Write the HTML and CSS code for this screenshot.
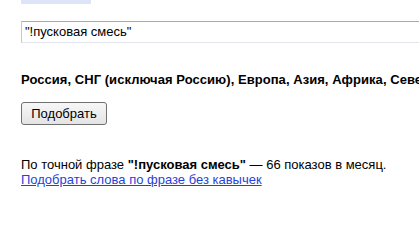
FILE: index.html
```html
<!DOCTYPE html>
<html>
<head>
<meta charset="utf-8">
<link rel="stylesheet" href="styles.css">
</head>
<body>
<div class="page">
  <div class="tab"></div>
  <div class="query">"!пусковая смесь"</div>
  <div class="regions">Россия, СНГ (исключая Россию), Европа, Азия, Африка, Северная Америка</div>
  <button class="btn">Подобрать</button>
  <div class="result">По точной фразе <b>"!пусковая смесь"</b> — 66 показов в месяц.</div>
  <a class="link" href="#">Подобрать слова по фразе без кавычек</a>
</div>
</body>
</html>
```

FILE: styles.css
```css
html, body {
  margin: 0;
  padding: 0;
  background: #fff;
  overflow: hidden;
}
body {
  font-family: Arial, "Liberation Sans", sans-serif;
  font-size: 13px;
  color: #000;
}
.page {
  padding-left: 21px;
  width: 398px;
  overflow: hidden;
  display: flex;
  flex-direction: column;
  align-items: flex-start;
}
.tab {
  width: 70px;
  height: 4px;
  background: #dde4f7;
}
.query {
  margin-top: 17px;
  width: 560px;
  height: 20px;
  border-top: 1px solid #a9a9a9;
  border-left: 1px solid #c8c8d0;
  border-bottom: 1px solid #e3e3ee;
  box-sizing: content-box;
  padding-left: 3px;
  line-height: 20px;
  white-space: nowrap;
}
.regions {
  margin-top: 29px;
  font-weight: bold;
  white-space: nowrap;
  line-height: 15px;
  letter-spacing: 0.05px;
}
.btn {
  margin-top: 15px;
  width: 86px;
  height: 23px;
  font-family: Arial, "Liberation Sans", sans-serif;
  font-size: 13px;
  color: #000;
  background: linear-gradient(#f7f7f7, #e4e4e4);
  border: 1px solid #707070;
  border-radius: 3px;
  padding: 0;
}
.result {
  margin-top: 32px;
  line-height: 15px;
  white-space: nowrap;
}
.link {
  color: #2a3fd6;
  line-height: 15px;
  white-space: nowrap;
}
```
